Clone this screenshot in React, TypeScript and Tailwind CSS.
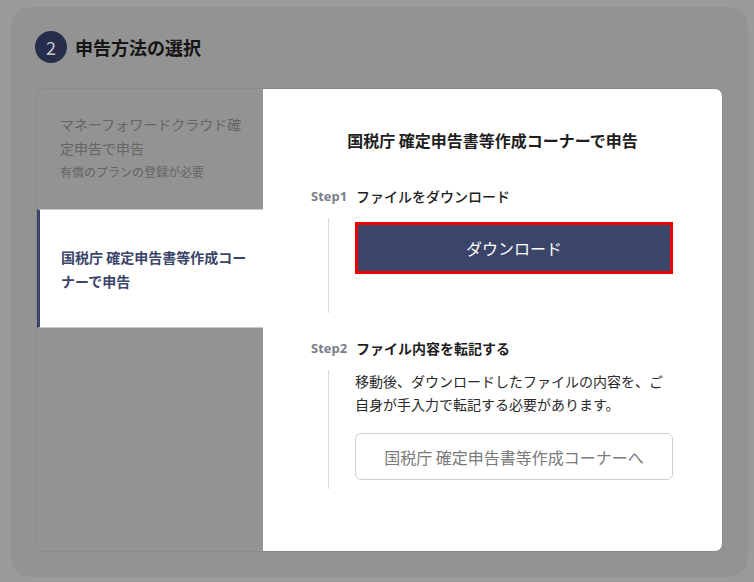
import React from "react";

const font = "font-['Noto_Sans_CJK_JP','Noto_Sans',sans-serif]";

function StepHeader({ step, title, bold }: { step: string; title: string; bold?: boolean }) {
  return (
    <div className="flex items-center h-[20px]">
      <span className="w-[36px] text-[13px] font-bold text-[#7b7f8a] leading-[20px] font-['Open_Sans','Noto_Sans',sans-serif]">
        {step}
      </span>
      <span
        className={`ml-[9px] text-[14px] leading-[20px] text-[#1e1e1e] ${bold ? "font-bold" : "font-medium"}`}
      >
        {title}
      </span>
    </div>
  );
}

export default function App() {
  return (
    <div className={`w-[754px] h-[582px] bg-[#9a9a9a] pt-[7px] pl-[11px] ${font}`}>
      <div className="w-[737px] h-[570px] rounded-[20px] bg-[#939393] pt-[24px]">
        <div className="flex items-center gap-[8px] pl-[24px] h-[32px]">
          <div className="w-[32px] h-[32px] rounded-full bg-[#272e4b] flex items-center justify-center text-[18px] text-[#c4c6cc] leading-none">
            2
          </div>
          <h2 className="text-[18px] font-bold text-[#151515] leading-none">申告方法の選択</h2>
        </div>

        <div className="mt-[25px] mx-[25px] h-[464px] rounded-[8px] border border-[#8a8a8a] overflow-hidden flex">
          <div className="w-[226px] flex flex-col">
            <div className="h-[120px] pt-[23px] pl-[23px] pr-[16px]">
              <p className="text-[14px] leading-[24px] text-[#656565]">マネーフォワードクラウド確定申告で申告</p>
              <p className="text-[12px] leading-[24px] text-[#656565]">有償のプランの登録が必要</p>
            </div>
            <div className="h-[119px] bg-white border-l-[3px] border-[#3b4569] border-y border-y-[#c8c8c8] flex items-center pl-[21px] pr-[14px]">
              <p className="text-[14px] leading-[24px] font-bold text-[#3b4569]">
                国税庁 確定申告書等作成コーナーで申告
              </p>
            </div>
          </div>

          <div className="flex-1 bg-white pt-[41px] pl-[48px]">
            <h3 className="text-center pr-[48px] text-[16px] font-bold leading-[20px] text-[#1e1e1e]">
              国税庁 確定申告書等作成コーナーで申告
            </h3>

            <div className="mt-[36px]">
              <StepHeader step="Step1" title="ファイルをダウンロード" />
              <div className="mt-[12px] ml-[17px] border-l border-[#dcdcdc] pl-[26px] pt-[4px] pb-[39px]">
                <button className="w-[318px] h-[52px] bg-[#3b4569] border-[3px] border-[#f00000] text-white text-[16px] leading-none">
                  ダウンロード
                </button>
              </div>
            </div>

            <div className="mt-[25px]">
              <StepHeader step="Step2" title="ファイル内容を転記する" bold />
              <div className="mt-[12px] ml-[17px] border-l border-[#dcdcdc] pl-[26px] pb-[9px]">
                <p className="w-[318px] text-[14px] leading-[23px] text-[#2a2a2a]">
                  移動後、ダウンロードしたファイルの内容を、ご自身が手入力で転記する必要があります。
                </p>
                <button className="mt-[17px] w-[318px] h-[47px] rounded-[6px] border border-[#cfcfcf] bg-white text-[16px] text-[#7a7a7a] leading-none">
                  国税庁 確定申告書等作成コーナーへ
                </button>
              </div>
            </div>
          </div>
        </div>
      </div>
    </div>
  );
}
